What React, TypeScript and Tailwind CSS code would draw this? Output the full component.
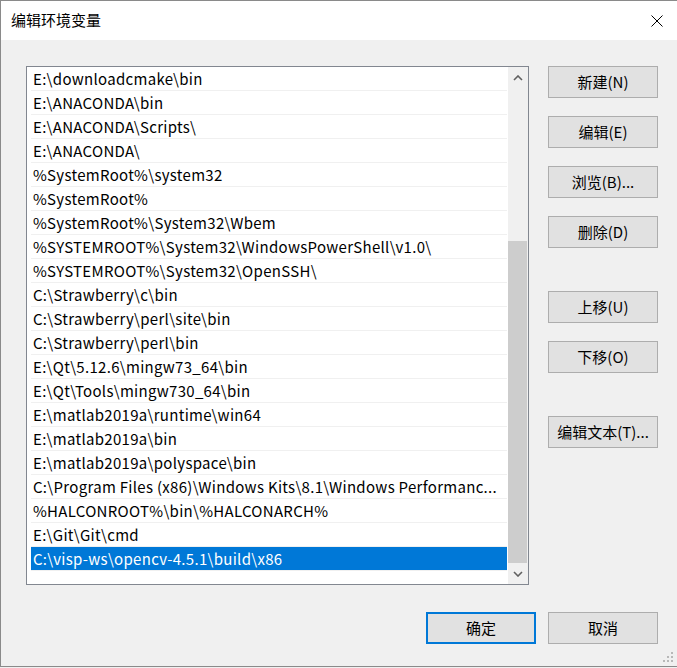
import React from "react";

const paths = [
  "E:\\downloadcmake\\bin",
  "E:\\ANACONDA\\bin",
  "E:\\ANACONDA\\Scripts\\",
  "E:\\ANACONDA\\",
  "%SystemRoot%\\system32",
  "%SystemRoot%",
  "%SystemRoot%\\System32\\Wbem",
  "%SYSTEMROOT%\\System32\\WindowsPowerShell\\v1.0\\",
  "%SYSTEMROOT%\\System32\\OpenSSH\\",
  "C:\\Strawberry\\c\\bin",
  "C:\\Strawberry\\perl\\site\\bin",
  "C:\\Strawberry\\perl\\bin",
  "E:\\Qt\\5.12.6\\mingw73_64\\bin",
  "E:\\Qt\\Tools\\mingw730_64\\bin",
  "E:\\matlab2019a\\runtime\\win64",
  "E:\\matlab2019a\\bin",
  "E:\\matlab2019a\\polyspace\\bin",
  "C:\\Program Files (x86)\\Windows Kits\\8.1\\Windows Performanc...",
  "%HALCONROOT%\\bin\\%HALCONARCH%",
  "E:\\Git\\Git\\cmd",
  "C:\\visp-ws\\opencv-4.5.1\\build\\x86",
];

const font = "font-['Microsoft_YaHei_UI','Noto_Sans_CJK_SC',sans-serif]";

function Button({ label, primary = false }: { label: string; primary?: boolean }) {
  return (
    <div
      className={`flex h-[32px] w-[110px] items-center justify-center bg-[#e1e1e1] text-[15px] text-black ${
        primary ? "border-2 border-[#0078d7]" : "border border-[#adadad]"
      }`}
    >
      {label}
    </div>
  );
}

function Chevron({ down = false }: { down?: boolean }) {
  return (
    <svg width="10" height="6" viewBox="0 0 10 6" className={down ? "rotate-180" : ""}>
      <path d="M1 5 L5 1 L9 5" fill="none" stroke="#606060" strokeWidth="1.6" />
    </svg>
  );
}

export default function App() {
  return (
    <div className={`h-[668px] w-[677px] overflow-hidden bg-[#f0f0f0] ${font}`}>
      <div className="flex h-[667px] w-[678px] flex-col border-l border-t border-b border-[#8a8a8a]">
        {/* Title bar */}
        <div className="flex h-[39px] shrink-0 items-center justify-between bg-white pl-[10px] pr-[15px]">
          <span className="text-[15px] text-black">编辑环境变量</span>
          <svg width="12" height="12" viewBox="0 0 12 12">
            <path d="M0.5 0.5 L11.5 11.5 M11.5 0.5 L0.5 11.5" stroke="#000" strokeWidth="1" />
          </svg>
        </div>

        {/* Body */}
        <div className="relative flex flex-1 flex-col bg-[#f0f0f0] pl-[25px] pt-[26px]">
          <div className="flex gap-[19px]">
            {/* List box */}
            <div className="flex h-[519px] w-[503px] border border-[#828790] bg-white">
              <div className="flex flex-1 flex-col pl-[4px] pr-[1px]">
                {paths.map((p, i) => {
                  const selected = i === paths.length - 1;
                  return (
                    <div
                      key={p}
                      className={`flex h-[24px] shrink-0 items-start border-b border-[#f0f0f0] ${
                        selected ? "bg-[#0078d7] text-white" : "text-black"
                      }`}
                    >
                      <span className="flex h-[23px] items-center whitespace-nowrap pl-[2px] text-[15px] leading-none tracking-[0.3px]">
                        {p}
                      </span>
                    </div>
                  );
                })}
              </div>
              {/* Scrollbar */}
              <div className="flex w-[20px] flex-col bg-[#f0f0f0]">
                <div className="flex h-[21px] items-center justify-center">
                  <Chevron />
                </div>
                <div className="flex flex-1 flex-col pt-[153px]">
                  <div className="h-[322px] w-[19px] bg-[#cdcdcd]" />
                </div>
                <div className="flex h-[21px] items-center justify-center">
                  <Chevron down />
                </div>
              </div>
            </div>

            {/* Side buttons */}
            <div className="flex flex-col gap-[18px]">
              <Button label="新建(N)" />
              <Button label="编辑(E)" />
              <Button label="浏览(B)..." />
              <Button label="删除(D)" />
              <div className="mt-[25px]">
                <Button label="上移(U)" />
              </div>
              <Button label="下移(O)" />
              <div className="mt-[25px]">
                <Button label="编辑文本(T)..." />
              </div>
            </div>
          </div>

          {/* Footer */}
          <div className="mt-[27px] flex gap-[12px] pl-[400px]">
            <Button label="确定" primary />
            <Button label="取消" />
          </div>

          {/* Resize grip */}
          <svg className="absolute bottom-[3px] right-[4px]" width="11" height="11" viewBox="0 0 11 11">
            <rect x="8" y="0" width="2" height="2" fill="#b8b8b8" />
            <rect x="4" y="4" width="2" height="2" fill="#b8b8b8" />
            <rect x="8" y="4" width="2" height="2" fill="#b8b8b8" />
            <rect x="0" y="8" width="2" height="2" fill="#b8b8b8" />
            <rect x="4" y="8" width="2" height="2" fill="#b8b8b8" />
            <rect x="8" y="8" width="2" height="2" fill="#b8b8b8" />
          </svg>
        </div>
      </div>
    </div>
  );
}
